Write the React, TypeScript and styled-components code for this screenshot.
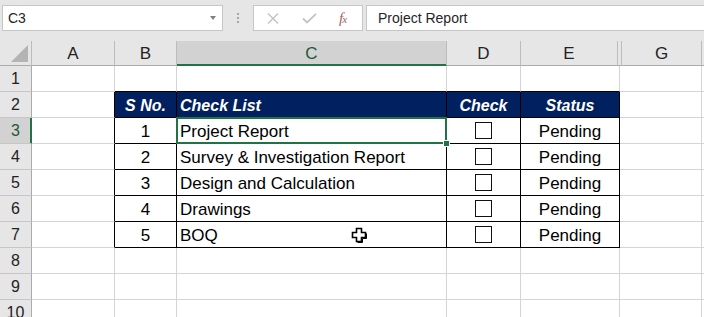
import React from "react";
import styled, { createGlobalStyle, css } from "styled-components";

const GlobalStyle = createGlobalStyle`
  html, body { margin: 0; padding: 0; background: #fff; }
  body { font-family: "Liberation Sans", Arial, sans-serif; }
`;

const GRAY = "#d4d4d4";
const BLACK = "#000";
const GREEN = "#217346";

const Sheet = styled.div`
  position: relative;
  width: 704px;
  height: 317px;
  overflow: hidden;
  background: #fff;
`;

const Toolbar = styled.div`
  height: 41px;
  box-sizing: border-box;
  background: #e6e6e6;
  display: flex;
  align-items: flex-start;
  padding: 5px 0 0 2px;
`;

const Field = styled.div`
  box-sizing: border-box;
  height: 26px;
  background: #fff;
  border: 1px solid #c6c6c6;
  display: flex;
  align-items: center;
  font-size: 14px;
  color: #262626;
`;

const NameBox = styled(Field)`
  width: 221px;
  padding-left: 5px;
`;

const DropArrow = styled.span`
  margin-left: auto;
  margin-right: 6px;
  width: 0;
  height: 0;
  border-left: 3.5px solid transparent;
  border-right: 3.5px solid transparent;
  border-top: 4px solid #808080;
`;

const Grip = styled.div`
  margin: 8px 0 0 14px;
  display: flex;
  flex-direction: column;
  gap: 2px;
`;

const GripDot = styled.span`
  width: 2px;
  height: 2px;
  background: #a6a6a6;
`;

const FxButtons = styled(Field)`
  width: 110px;
  margin-left: 14px;
  padding-left: 13px;
`;

const IconSlot = styled.span<{ $gap: number }>`
  display: flex;
  margin-left: ${(p) => p.$gap}px;
`;

const FxText = styled.span`
  font-family: "Liberation Serif", "Times New Roman", serif;
  font-style: italic;
  font-size: 15px;
  color: #a0625e;
  margin-left: 22px;
  letter-spacing: -1px;
  & > small {
    font-size: 11px;
  }
`;

const FormulaInput = styled(Field)`
  flex: 1;
  margin-left: 3px;
  padding-left: 11px;
  border-right: none;
`;

const headCols = "32px 83px 62px 270px 74px 97px 4px 80px 1fr";
const bodyCols = "32px 83px 62px 270px 74px 99px 82px 1fr";

const HeaderRow = styled.div`
  display: grid;
  grid-template-columns: ${headCols};
  height: 25px;
`;

const ColHeader = styled.div<{ $selected?: boolean; $last?: boolean }>`
  position: relative;
  box-sizing: border-box;
  background: ${(p) => (p.$selected ? "#d2d2d2" : "#e6e6e6")};
  border-right: ${(p) => (p.$last ? "none" : "1px solid #bcbcbc")};
  border-bottom: 1px solid ${(p) => (p.$selected ? GREEN : "#ababab")};
  box-shadow: ${(p) => (p.$selected ? `inset 0 -1px 0 ${GREEN}` : "none")};
  display: flex;
  align-items: center;
  justify-content: center;
  font-size: 17px;
  padding-top: 1px;
  color: ${(p) => (p.$selected ? "#1c5a38" : "#222")};
`;

const CornerTriangle = styled.span`
  position: absolute;
  right: 3px;
  bottom: 3px;
  width: 0;
  height: 0;
  border-left: 17px solid transparent;
  border-bottom: 17px solid #b4b4b4;
`;

const Row = styled.div`
  display: grid;
  grid-template-columns: ${bodyCols};
  height: 26px;
`;

const RowHeader = styled.div<{ $selected?: boolean }>`
  box-sizing: border-box;
  background: ${(p) => (p.$selected ? "#d2d2d2" : "#e6e6e6")};
  border-right: 1px solid ${(p) => (p.$selected ? GREEN : "#ababab")};
  border-bottom: 1px solid #c6c6c6;
  box-shadow: ${(p) => (p.$selected ? `inset -1px 0 0 ${GREEN}` : "none")};
  display: flex;
  align-items: center;
  justify-content: center;
  font-size: 16px;
  padding-top: 1px;
  color: ${(p) => (p.$selected ? "#1c5a38" : "#222")};
`;

const Cell = styled.div<{
  $right: string;
  $bottom: string;
  $head?: boolean;
  $center?: boolean;
  $last?: boolean;
}>`
  position: relative;
  box-sizing: border-box;
  border-right: ${(p) => (p.$last ? "none" : `1px solid ${p.$right}`)};
  border-bottom: 1px solid ${(p) => p.$bottom};
  background: ${(p) => (p.$head ? "#002060" : "#fff")};
  display: flex;
  align-items: flex-end;
  justify-content: ${(p) => (p.$center ? "center" : "flex-start")};
  padding: 0 3px 2px;
  font-size: 17px;
  line-height: 19px;
  color: #000;
  white-space: nowrap;
  ${(p) =>
    p.$head &&
    css`
      color: #fff;
      font-size: 16px;
      font-weight: 700;
      font-style: italic;
    `}
`;

const Checkbox = styled.span`
  align-self: center;
  box-sizing: border-box;
  width: 17px;
  height: 17px;
  margin-top: 2px;
  border: 1px solid #111;
  background: #fff;
`;

const SelectionFrame = styled.span`
  position: absolute;
  top: -1px;
  left: -1px;
  right: -1px;
  bottom: -1px;
  border: 2px solid ${GREEN};
  z-index: 2;
  pointer-events: none;
`;

const FillHandle = styled.span`
  position: absolute;
  right: -4px;
  bottom: -4px;
  width: 5px;
  height: 5px;
  background: ${GREEN};
  border: 1px solid #fff;
  z-index: 3;
`;

const Cursor = styled.svg`
  position: absolute;
  left: 351px;
  top: 227px;
  z-index: 4;
`;

const cols = ["A", "B", "C", "D", "E", "G"];

const items: [string, string][] = [
  ["1", "Project Report"],
  ["2", "Survey & Investigation Report"],
  ["3", "Design and Calculation"],
  ["4", "Drawings"],
  ["5", "BOQ"],
];

const headers = ["S No.", "Check List", "Check", "Status"];

function renderCells(r: number) {
  const inTableRow = r >= 2 && r <= 7;
  return cols.map((c, ci) => {
    const inTableCol = ci >= 1 && ci <= 4;
    const right = inTableRow && (ci === 0 || inTableCol) ? BLACK : GRAY;
    const bottom = inTableCol && (r === 1 || inTableRow) ? BLACK : GRAY;
    let content: React.ReactNode = null;
    const center = ci !== 2;
    if (inTableRow && inTableCol) {
      if (r === 2) {
        content = headers[ci - 1];
      } else {
        const item = items[r - 3];
        if (ci === 1) content = item[0];
        if (ci === 2) content = item[1];
        if (ci === 3) content = <Checkbox />;
        if (ci === 4) content = "Pending";
      }
    }
    const selected = r === 3 && ci === 2;
    return (
      <Cell
        key={c}
        $right={right}
        $bottom={bottom}
        $head={r === 2 && inTableCol}
        $center={center}
      >
        {content}
        {selected && (
          <>
            <SelectionFrame />
            <FillHandle />
          </>
        )}
      </Cell>
    );
  });
}

export default function App() {
  const rows = Array.from({ length: 10 }, (_, i) => i + 1);
  return (
    <>
      <GlobalStyle />
      <Sheet>
        <Toolbar>
          <NameBox>
            C3
            <DropArrow />
          </NameBox>
          <Grip>
            <GripDot />
            <GripDot />
            <GripDot />
          </Grip>
          <FxButtons>
            <IconSlot $gap={0}>
              <svg width="12" height="11" viewBox="0 0 12 11">
                <path d="M1 0.5 L11 10.5 M11 0.5 L1 10.5" stroke="#c3c3c3" strokeWidth="1.4" fill="none" />
              </svg>
            </IconSlot>
            <IconSlot $gap={23}>
              <svg width="15" height="11" viewBox="0 0 15 11">
                <path d="M1 5.5 L5 9.5 L14 0.8" stroke="#c3c3c3" strokeWidth="1.8" fill="none" />
              </svg>
            </IconSlot>
            <FxText>
              f<small>x</small>
            </FxText>
          </FxButtons>
          <FormulaInput>Project Report</FormulaInput>
        </Toolbar>

        <HeaderRow>
          <ColHeader>
            <CornerTriangle />
          </ColHeader>
          <ColHeader>A</ColHeader>
          <ColHeader>B</ColHeader>
          <ColHeader $selected>C</ColHeader>
          <ColHeader>D</ColHeader>
          <ColHeader>E</ColHeader>
          <ColHeader />
          <ColHeader>G</ColHeader>
          <ColHeader $last />
        </HeaderRow>

        {rows.map((r) => (
          <Row key={r}>
            <RowHeader $selected={r === 3}>{r}</RowHeader>
            {renderCells(r)}
            <Cell $right={GRAY} $bottom={GRAY} $last />
          </Row>
        ))}

        <Cursor width="17" height="17" viewBox="0 0 17 17">
          <path
            d="M5.5 1.5 H10.5 V5.5 H14.5 V10.5 H10.5 V14.5 H5.5 V10.5 H1.5 V5.5 H5.5 Z"
            fill="#fff"
            stroke="#000"
            strokeWidth="1.6"
          />
          <path d="M11.5 11.5 V15.5 H6.5 M15.5 6.5 V11.5 H11.5" stroke="#000" strokeWidth="1" fill="none" />
        </Cursor>
      </Sheet>
    </>
  );
}
